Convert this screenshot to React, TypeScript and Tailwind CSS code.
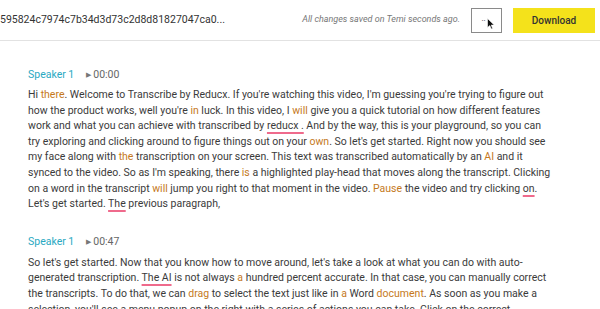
import React from 'react';

// [word] = highlighted word, {word} = flagged word
const para1 = [
  "Hi [there]. Welcome to Transcribe by Reducx. If you're watching this video, I'm guessing you're trying to figure out",
  "how the product works, well you're [in] luck. In this video, I [will] give you a quick tutorial on how different features",
  "work and what you can achieve with transcribed by {reducx .} And by the way, this is your playground, so you can",
  "try exploring and clicking around to figure things out on your [own]. So let's get started. Right now you should see",
  "my face along with [the] transcription on your screen. This text was transcribed automatically by an [AI] and it",
  "synced to the video. So as I'm speaking, there [is] a highlighted play-head that moves along the transcript. Clicking",
  "on a word in the transcript [will] jump you right to that moment in the video. [Pause] the video and try clicking {on}.",
  "Let's get started. {The} previous paragraph,",
];

const para2 = [
  "So let's get started. Now that you know how to move around, let's take a look at what you can do with auto-",
  "generated transcription. {The AI} is not always [a] hundred percent accurate. In that case, you can manually correct",
  "the transcripts. To do that, we can [drag] to select the text just like in [a] Word [document]. As soon as you make a",
  "selection, you'll see a menu popup on the right with a series of actions you can take. Click on the correct",
];

const renderLine = (line: string) => {
  const parts = line.split(/(\[[^\]]+\]|\{[^}]+\})/);
  return parts.map((p, i) => {
    if (p.startsWith('[')) {
      return <span key={i} className="text-[#c5791c]">{p.slice(1, -1)}</span>;
    }
    if (p.startsWith('{')) {
      return (
        <span key={i} className="underline decoration-[#ef6a8c] decoration-[1.5px] underline-offset-[3px]">
          {p.slice(1, -1)}
        </span>
      );
    }
    return <span key={i}>{p}</span>;
  });
};

const Paragraph: React.FC<{ lines: string[] }> = ({ lines }) => (
  <div className="text-[10.5px] leading-[15.6px] text-[#3b3b3b]">
    {lines.map((l, i) => (
      <div key={i} className="whitespace-nowrap">{renderLine(l)}</div>
    ))}
  </div>
);

const SpeakerRow: React.FC<{ time: string }> = ({ time }) => (
  <div className="flex items-center h-[16px] text-[10.5px]">
    <span className="text-[#29a9c2]">Speaker 1</span>
    <span className="ml-[12px] text-[#777] text-[7px]">▶</span>
    <span className="ml-[2px] text-[#666]">{time}</span>
  </div>
);

export default function App() {
  return (
    <div className="w-[600px] h-[309px] overflow-hidden bg-white" style={{ fontFamily: 'Roboto, "Liberation Sans", sans-serif' }}>
      <header className="h-[41px] flex items-center border-b border-[#e2e2e2] pr-[5px]">
        <span className="text-[10.5px] text-[#333] whitespace-nowrap">595824c7974c7b34d3d73c2d8d81827047ca0...</span>
        <div className="ml-auto flex items-center">
          <span className="italic text-[9px] text-[#777]">All changes saved on Temi seconds ago.</span>
          <button className="relative ml-[11px] w-[31px] h-[25px] border border-[#8a8a8a] bg-white flex items-center justify-center text-[8px] leading-none text-[#333]">
            <span className="-mt-[2px] -ml-[6px]">..</span>
            <svg className="absolute left-[15px] top-[9px]" width="8" height="12" viewBox="0 0 8 12">
              <path d="M0.5 0.5 L0.5 9.5 L2.8 7.6 L4.3 11 L5.6 10.4 L4.2 7.1 L7.2 7.1 Z" fill="#111" stroke="#fff" strokeWidth="0.6" />
            </svg>
          </button>
          <button className="ml-[11px] w-[82px] h-[25px] bg-[#f4e21b] text-[10px] font-medium text-[#333]">
            Download
          </button>
        </div>
      </header>
      <main className="pl-[28px] pt-[26px]">
        <SpeakerRow time="00:00" />
        <div className="mt-[4px]">
          <Paragraph lines={para1} />
        </div>
        <div className="mt-[22px]">
          <SpeakerRow time="00:47" />
        </div>
        <div className="mt-[5px]">
          <Paragraph lines={para2} />
        </div>
      </main>
    </div>
  );
}
